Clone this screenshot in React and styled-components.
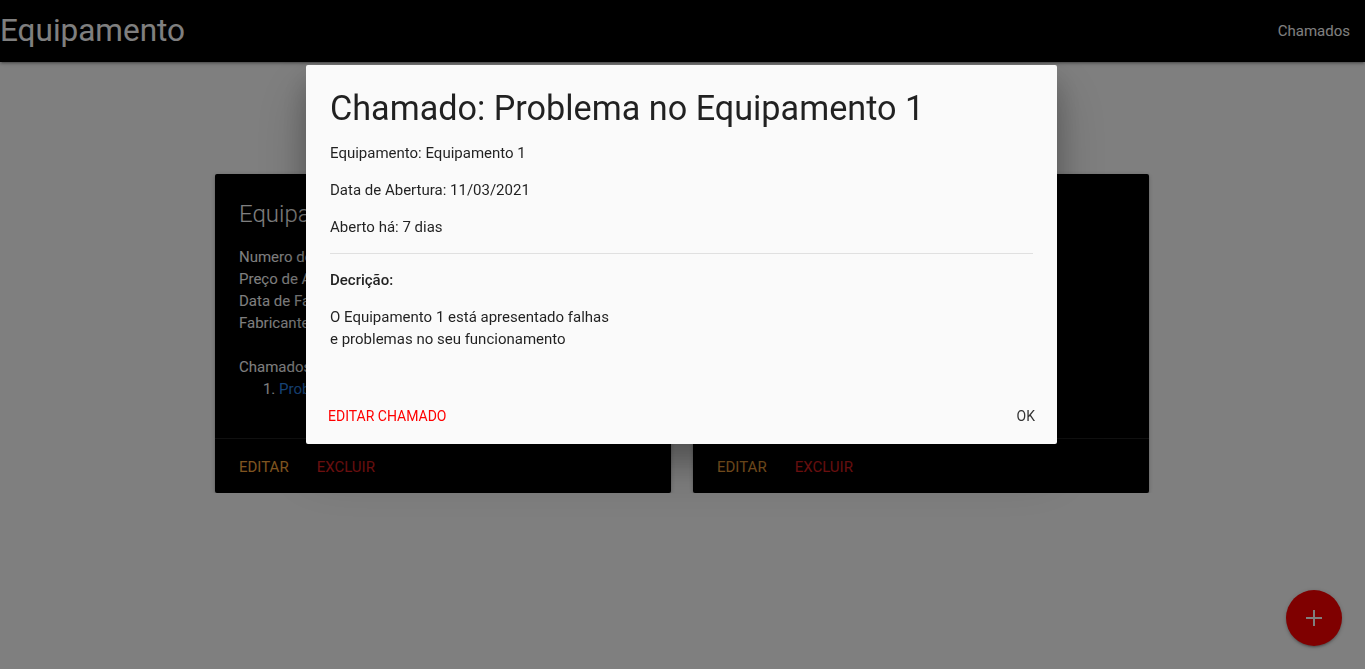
import React from 'react';
import styled, { createGlobalStyle } from 'styled-components';

const GlobalStyle = createGlobalStyle`
  html, body {
    margin: 0;
    padding: 0;
    background: #fff;
    font-family: Roboto, "Liberation Sans", sans-serif;
    font-size: 15px;
    line-height: 1.5;
    color: rgba(0, 0, 0, 0.87);
  }
  * { box-sizing: border-box; }
`;

const Nav = styled.nav`
  height: 62px;
  background: #000;
  color: #fff;
  display: flex;
  align-items: center;
  justify-content: space-between;
  box-shadow: 0 2px 2px 0 rgba(0,0,0,0.14), 0 3px 1px -2px rgba(0,0,0,0.12), 0 1px 5px 0 rgba(0,0,0,0.2);
`;

const Brand = styled.a`
  font-size: 31.5px;
  line-height: 62px;
  color: #fff;
  text-decoration: none;
`;

const NavLink = styled.a`
  font-size: 15px;
  padding: 0 15px;
  color: #fff;
  text-decoration: none;
`;

const Container = styled.main`
  width: 935px;
  margin: 0 auto;
  padding-top: 112px;
  display: grid;
  grid-template-columns: 456px 456px;
  gap: 22px;
`;

const Card = styled.div`
  background: #000;
  color: #fff;
  border-radius: 2px;
  display: flex;
  flex-direction: column;
  box-shadow: 0 2px 2px 0 rgba(0,0,0,0.14), 0 3px 1px -2px rgba(0,0,0,0.12), 0 1px 5px 0 rgba(0,0,0,0.2);
`;

const CardContent = styled.div`
  padding: 24px 24px 38px;
  flex: 1;
`;

const CardTitle = styled.span`
  display: block;
  font-size: 24px;
  font-weight: 300;
  line-height: 32px;
  margin-bottom: 16px;
`;

const Line = styled.div`
  line-height: 22px;
  min-height: 22px;
`;

const List = styled.ol`
  margin: 0;
  padding-left: 40px;
  line-height: 22px;
`;

const Link = styled.a`
  color: #2f8cf5;
  text-decoration: none;
`;

const CardAction = styled.div`
  border-top: 1px solid rgba(160, 160, 160, 0.2);
  padding: 17px 24px 15px;
  display: flex;
  gap: 28px;
`;

const ActionLink = styled.a`
  color: ${(p) => p.$color};
  text-transform: uppercase;
  font-size: 15px;
  line-height: 22px;
`;

const Overlay = styled.div`
  position: fixed;
  inset: 0;
  background: rgba(0, 0, 0, 0.5);
`;

const Modal = styled.div`
  position: fixed;
  top: 65px;
  left: 306px;
  width: 751px;
  background: #fafafa;
  border-radius: 2px;
  box-shadow: 0 16px 28px 0 rgba(0,0,0,0.22), 0 25px 55px 0 rgba(0,0,0,0.21);
`;

const ModalContent = styled.div`
  padding: 24px 24px 23px;
`;

const ModalTitle = styled.h4`
  margin: 0;
  font-size: 34.2px;
  font-weight: 400;
  line-height: 38px;
`;

const Para = styled.p`
  margin: 15px 0;
  line-height: 22px;
  font-weight: ${(p) => (p.$bold ? 500 : 400)};
`;

const Rule = styled.hr`
  border: none;
  border-top: 1px solid #e0e0e0;
  margin: 14px 0 0;
`;

const ModalFooter = styled.div`
  height: 56px;
  padding: 4px 6px;
  display: flex;
  align-items: center;
  justify-content: space-between;
`;

const FlatButton = styled.button`
  background: none;
  border: none;
  height: 36px;
  padding: 0 16px;
  font-family: inherit;
  font-size: 14px;
  letter-spacing: 0;
  text-transform: uppercase;
  color: ${(p) => p.$color || '#343434'};
  cursor: pointer;
`;

const Fab = styled.button`
  position: fixed;
  right: 23px;
  bottom: 23px;
  width: 56px;
  height: 56px;
  border-radius: 50%;
  border: none;
  background: #ff0000;
  display: flex;
  align-items: center;
  justify-content: center;
  box-shadow: 0 2px 2px 0 rgba(0,0,0,0.14), 0 3px 1px -2px rgba(0,0,0,0.12), 0 1px 5px 0 rgba(0,0,0,0.2);
`;

const equipamentos = [
  {
    nome: 'Equipamento 1',
    serie: '123456',
    preco: 'R$ 1.500,00',
    data: '10/01/2020',
    fabricante: 'Fabricante A',
    chamados: ['Problema no Equipamento 1'],
  },
  {
    nome: 'Equipamento 2',
    serie: '654321',
    preco: 'R$ 2.300,00',
    data: '05/06/2019',
    fabricante: 'Fabricante B',
    chamados: ['Problema no Equipamento 2'],
  },
];

function EquipCard({ item }) {
  return (
    <Card>
      <CardContent>
        <CardTitle>{item.nome}</CardTitle>
        <Line>Numero de Série: {item.serie}</Line>
        <Line>Preço de Aquisição: {item.preco}</Line>
        <Line>Data de Fabricação: {item.data}</Line>
        <Line>Fabricante: {item.fabricante}</Line>
        <Line />
        <Line>Chamados:</Line>
        <List>
          {item.chamados.map((c) => (
            <li key={c}>
              <Link href="#">{c}</Link>
            </li>
          ))}
        </List>
      </CardContent>
      <CardAction>
        <ActionLink $color="#ffab40">Editar</ActionLink>
        <ActionLink $color="#f42424">Excluir</ActionLink>
      </CardAction>
    </Card>
  );
}

export default function App() {
  return (
    <>
      <GlobalStyle />
      <Nav>
        <Brand href="#">Equipamento</Brand>
        <NavLink href="#">Chamados</NavLink>
      </Nav>
      <Container>
        {equipamentos.map((item) => (
          <EquipCard key={item.nome} item={item} />
        ))}
      </Container>
      <Fab aria-label="Adicionar">
        <svg width="18" height="18" viewBox="0 0 18 18">
          <path d="M9 1v16M1 9h16" stroke="#fff" strokeWidth="2" />
        </svg>
      </Fab>
      <Overlay />
      <Modal>
        <ModalContent>
          <ModalTitle>Chamado: Problema no Equipamento 1</ModalTitle>
          <Para>Equipamento: Equipamento 1</Para>
          <Para>Data de Abertura: 11/03/2021</Para>
          <Para>Aberto há: 7 dias</Para>
          <Rule />
          <Para $bold>Decrição:</Para>
          <Para>
            O Equipamento 1 está apresentado falhas
            <br />
            e problemas no seu funcionamento
          </Para>
        </ModalContent>
        <ModalFooter>
          <FlatButton $color="#ff0000">Editar Chamado</FlatButton>
          <FlatButton>OK</FlatButton>
        </ModalFooter>
      </Modal>
    </>
  );
}
